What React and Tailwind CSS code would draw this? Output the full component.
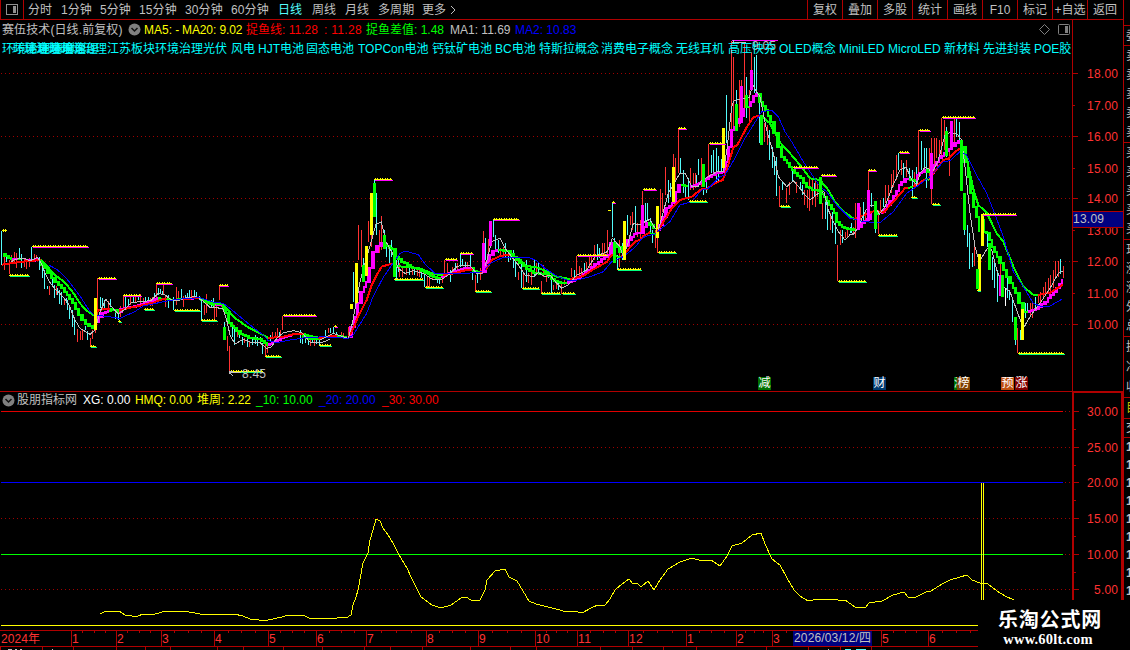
import React from "react";

const FONT = "font-['Liberation_Sans','Noto_Sans_CJK_SC',sans-serif]";
const C = "#54fcfc", R = "#ff3232", G = "#00ff00", M = "#ff00ff", Y = "#ffff00", S = "#ff0000", B = "#0000ff", W = "#c0c0c0";

// Each section lists its series in thirds of a pixel, relative to its origin.
const sections = [
  {
    o: [0, 220],
    cyan: "4,33,135 19,98,125 58,84,118 64,102,143 94,80,120 118,112,150 127,130,175 133,150,207 142,198,206 157,160,195 163,195,235 172,205,225 178,210,252 184,215,255 199,235,250 202,240,270 208,255,297 217,270,320 223,290,345 256,318,330 262,332,360 301,232,265 307,235,258 313,240,270 331,237,262 346,270,298 355,275,300 376,228,262 385,238,258 400,230,250 415,230,240 436,230,250 445,232,250 463,218,235 475,205,225 481,208,222 487,212,222 505,225,265 520,230,270 544,208,238 556,225,240 562,220,240 568,210,240 583,210,232 589,215,232 598,228,240 604,240,300 634,240,260 640,235,262 673,305,320 697,320,350 703,318,375 718,330,355 727,350,375 742,350,380 757,350,375 766,345,372 772,350,378 781,350,370 787,370,402 811,345,365 838,335,350 901,330,370 907,350,372 916,345,368 925,350,375 937,345,370 949,350,372 958,350,375",
    red: "13,110,150 28,120,163 34,105,130 43,96,125 49,98,145 73,115,140 79,120,148 88,115,140 103,102,118 109,105,118 148,198,225 169,198,225 193,240,255 232,328,365 241,332,360 247,330,360 271,355,380 277,330,358 286,300,340 292,175,310 325,242,265 361,258,292 370,228,270 391,230,255 406,225,250 421,222,255 430,235,258 451,235,258 457,230,258 469,190,235 490,195,222 496,225,260 529,202,255 535,212,235 550,228,262 574,210,235 613,255,285 619,222,280 643,250,298 649,245,292 658,195,240 664,250,262 682,348,392 688,378,455 712,335,350 733,355,370 748,365,382 796,370,408 802,378,400 817,335,355 826,335,350 832,325,350 841,330,350 847,288,330 931,350,378 943,350,378",
    boxes: [["283,234,9,96", Y], ["669,320,9,40", G]],
    high: "96,264,79 294,348,175 370,422,226 469,515,190 657,684,196 850,948,286",
    low: "28,88,166 271,288,379 355,364,304 431,462,268 521,600,271 604,652,301 796,843,409 956,992,376 690,788,454",
    fast: [[G, "10,103 22,108 37,117"], [M, "37,117 55,118"], [G, "55,118 64,118"], [M, "75,120 100,122 118,118"], [G, "120,122 138,145 160,175 180,195 205,225 222,250 240,285 262,312 282,325"], [M, "292,305 300,292 312,280 328,272"], [G, "328,272 345,270 357,275"], [M, "357,275 370,268 390,262 420,255 450,245 475,235"], [G, "475,235 500,237 520,240"], [M, "545,237 600,234"], [G, "600,236 620,245 645,256"], [M, "645,256 665,255"], [G, "665,255 680,280 690,310 705,325 725,342 750,353 780,358 805,375"], [M, "805,375 830,362 855,352 875,344"], [G, "905,345 925,355 960,358"]],
    slow: [[S, "5,134 30,130 60,126 100,122 122,120"], [G, "122,120 145,143 165,165 185,180 205,200 222,222 240,250 258,270 282,287"], [S, "288,274 310,267 330,266"], [G, "330,266 345,270 357,275"], [S, "357,272 390,263 420,257 460,248 480,240 500,235"], [G, "500,235 520,240 545,237"], [S, "545,237 600,234"], [G, "600,234 620,244 645,250 668,253 685,270 700,290 730,312 750,325 780,340 805,354"], [S, "805,354 850,350 880,343 912,342"], [G, "912,342 930,348 955,353"], [S, "955,353 975,352 992,350"]],
    blue: "148,136 170,148 190,165 210,188 240,228 268,272 280,283 320,290 345,292 360,296 380,285 400,278 430,258 460,252 490,245 530,238 600,233 640,246 670,250 690,265 720,290 750,315 790,345 805,362 830,368 870,360 910,354 990,349",
    white: "34,125 45,118 70,114 90,122 112,112 122,125 135,160 148,185 165,208 180,220 205,250 225,300 240,325 270,343 285,330 300,275 318,238 330,255 355,282 375,268 395,247 430,245 455,240 475,220 495,225 515,240 540,240 560,232 590,230 605,240 630,262 668,265 680,300 690,345 705,372 730,358 750,366 780,368 800,386 815,380 830,355 850,338 880,332 905,338 930,366 965,368 990,358",
  },
  {
    o: [320, 160],
    cyan: "16,510,528 31,503,520 40,500,520 49,515,528 100,335,425 169,100,225 130,295,320 163,60,70 193,210,250 199,250,292 208,255,310 214,240,290 229,300,358 235,290,335 268,325,345 283,325,345 304,325,355 313,335,382 352,340,370 358,350,372 391,330,365 406,308,335 421,280,320 427,297,315 436,305,320 451,280,320 457,335,360 472,340,368 496,235,300 520,178,230 526,225,270 535,240,280 556,248,290 565,280,305 571,270,300 580,270,325 586,290,350 604,300,385 619,300,365 643,300,350 655,310,345 685,330,355 694,345,400 715,370,390 763,330,362 793,310,340 832,253,300 838,265,295 877,128,230 883,235,260 892,285,328 907,250,300 922,165,225 946,138,215 976,130,185 982,130,180 991,175,215 997,210,250",
    red: "25,503,520 64,515,535 70,520,530 85,500,530 115,195,300 124,210,320 145,183,245 154,225,260 178,210,280 184,168,270 238,310,350 247,320,350 259,325,345 277,325,345 292,330,348 298,325,350 322,350,380 328,350,380 337,340,360 367,345,370 373,300,350 382,308,340 397,320,345 412,310,330 442,305,320 466,345,392 481,325,360 490,213,250 505,238,290 541,265,285 550,262,290 595,335,360 610,335,385 625,340,370 634,330,375 649,310,340 664,362,400 670,315,350 679,330,365 700,375,390 709,370,388 724,370,402 733,355,375 754,325,352 769,288,350 778,318,345 784,325,345 799,305,330 808,290,325 814,290,320 823,255,300 847,250,290 853,250,285 862,210,290 898,240,320 931,168,195 937,155,210 952,190,230 961,180,240 967,92,135 1006,235,265 1012,235,280",
    boxes: [["90,432,9,14", Y], ["105,310,9,120", Y], ["126,315,9,50", G], ["135,258,9,90", Y], ["150,98,9,127", Y], ["159,68,9,103", G], ["189,225,9,42", G], ["219,265,9,88", G], ["486,248,9,88", M], ["507,183,9,75", M], ["879,245,9,62", G], ["909,183,9,117", Y], ["963,135,9,84", M], ["1008,138,9,95", Y]],
    high: "163,215,58 42,50,498 375,412,298 421,458,280 520,596,178 770,864,286 876,885,127 970,1008,88",
    low: "223,308,358 315,368,382 466,513,394 605,657,385 664,720,400 726,765,400 892,962,328 1014,1020,276",
    fast: [[M, "0,532 40,529"], [G, "50,529 80,530"], [M, "88,530 98,500 108,470 118,430 128,395 142,365 152,325 165,275 178,258 190,250"], [G, "190,250 205,258 220,268 230,290 250,305 275,320 300,328 320,340 345,350 362,355"], [M, "362,352 375,345 400,335 440,325 455,325"], [G, "455,325 465,333 482,338"], [M, "482,338 490,335 500,310 512,285 525,272 535,271"], [G, "535,271 565,272 585,290 605,310 625,328 645,338 665,342 680,340 700,358 725,370 740,370"], [M, "740,370 760,362 785,348 810,330 830,312 850,298 868,285 878,250"], [G, "885,252 895,262 908,275"], [M, "912,268 918,258 930,240 945,222 965,218 975,200 984,188"], [G, "984,188 995,195 1005,205"]],
    slow: [[S, "0,535 40,527 50,528"], [G, "50,528 60,530 80,531"], [S, "85,532 100,505 115,468 140,420 155,375 170,345 185,320 215,311"], [G, "225,318 270,322 310,330 345,343 370,345"], [S, "370,345 400,340 440,330 460,328"], [G, "460,330 480,338"], [S, "480,338 500,325 515,300 540,288 570,284"], [G, "570,286 590,292 620,318 650,322 670,330 690,338 710,350 750,357"], [S, "750,357 790,348 820,328 860,306 877,283"], [G, "883,288 905,292"], [S, "905,290 925,268 945,245 962,238 970,228 990,217"], [G, "990,220 1008,224"]],
    blue: "0,530 85,535 100,525 115,500 140,460 160,408 190,352 220,308 240,280 255,273 295,284 315,312 345,340 420,342 490,335 510,310 550,292 630,294 650,302 675,325 710,348 740,360 770,360 810,350 850,335 875,305 910,290 945,262 962,240 975,230 1012,220",
    white: "0,540 20,530 40,520 60,527 85,535 97,490 110,420 120,365 135,310 155,240 168,192 184,186 198,245 220,285 235,325 255,340 280,332 310,340 340,360 365,358 385,345 410,320 430,315 450,318 470,340 485,342 500,305 515,245 540,235 555,265 575,290 595,315 615,345 640,350 655,338 675,350 690,345 710,370 725,385 745,375 770,345 800,330 825,290 862,275 877,235 900,260 910,290 925,245 940,190 960,195 975,185 990,178 1005,205 1018,205",
  },
  {
    o: [620, 30],
    cyan: "145,450,520 151,460,500 181,385,430 190,420,490 196,465,500 205,445,510 229,435,465 235,388,435 250,475,495 259,455,490 274,375,430 280,360,430 289,355,455 295,378,455 304,388,430 319,195,340 349,180,225 379,140,265 403,80,190 409,75,200 418,200,340 448,300,390 457,350,415 463,380,435 469,380,498 487,455,480 517,415,455 541,455,480 547,465,495 583,460,500 616,500,568 622,510,600 637,545,610 646,570,642 667,600,640 691,590,610",
    red: "112,620,667 106,600,655 121,478,590 127,490,545 136,410,495 160,373,410 166,385,450 175,298,430 211,415,480 220,430,480 226,430,475 244,385,470 265,342,440 334,33,300 340,80,300 358,150,290 364,150,170 373,35,240 388,180,285 394,65,120 433,280,335 442,285,345 478,468,530 499,475,520 508,455,495 529,455,490 553,480,525 562,480,535 568,440,542 577,445,525 586,450,530 592,460,500 607,520,568 631,550,600 652,645,753 661,600,645 676,605,625 682,595,620 700,590,612",
    boxes: [["156,410,9,105", Y], ["306,293,9,120", Y], ["246,402,9,70", G], ["345,222,9,80", G], ["360,168,9,110", M], ["367,235,10,28", M], ["375,195,9,38", G], ["390,120,9,60", M], ["420,255,9,90", G], ["597,440,9,82", G]],
    high: "175,198,295 267,316,340 519,594,411 602,648,436",
    low: "114,168,667 207,262,514 480,510,529 653,738,753",
    fast: [[M, "115,600 122,585 132,560 145,535 160,518 170,485 182,465"], [G, "182,465 205,468"], [M, "210,470 235,463 250,452 270,440 290,430 310,425 320,395 330,350 340,300 355,280 370,255"], [G, "375,232 390,230"], [M, "388,228 395,215 405,198 415,193"], [G, "415,193 425,215 440,240 455,275 468,310 480,350 490,380 505,400 520,420 545,445 565,470 580,480 600,482 615,500 630,525 645,550 655,575 670,592 705,600"]],
    slow: [[S, "112,605 140,560 155,535 180,510 215,500 245,477 260,477 280,462 308,450 320,420 340,352 352,345 380,292 400,262 420,256"], [G, "420,256 450,280 478,335 510,370 540,405 570,445 600,450 625,480 645,515 665,540 702,567"]],
    blue: "112,605 150,575 180,525 215,515 245,480 265,475 300,440 315,435 345,385 375,325 400,285 425,245 455,240 475,260 495,305 515,335 550,395 600,470 620,485 650,525 690,565",
    white: "115,600 130,545 145,490 165,455 180,430 195,430 215,470 235,470 245,450 265,440 290,425 310,425 322,350 335,230 342,212 375,205 388,202 398,165 410,185 420,200 440,300 460,370 475,440 500,470 520,452 540,475 555,495 570,510 595,490 612,485 625,540 640,575 655,605 675,630 690,615 702,610",
  },
  {
    o: [850, 90],
    cyan: "4,400,430 40,335,395 64,310,350 76,415,430 100,325,350 145,190,240 160,220,265 178,235,265 187,240,320 199,232,285 214,153,240 223,175,240 229,175,295 289,110,200 319,88,140 328,95,150 343,310,435 352,405,470 358,430,537 367,488,530 412,430,470 427,500,570 433,510,595 442,540,635 472,565,625 478,600,630 487,625,695 496,745,765 511,720,750 526,640,685 532,640,670 556,620,660 631,507,553",
    red: "16,340,443 31,350,410 46,365,400 55,243,300 85,375,433 91,330,370 106,285,340 115,285,330 124,253,310 130,240,290 139,195,270 154,210,255 169,210,260 193,245,290 205,120,260 238,175,270 244,143,343 253,145,230 259,145,205 268,150,200 274,85,200 283,90,180 298,180,258 313,88,155 373,450,528 451,515,600 502,715,790 541,640,680 547,640,685 565,615,640 571,605,635 580,590,620 586,575,615 595,565,610 601,555,610 610,540,595 616,513,560 625,513,560 640,528,563",
    boxes: [["22,340,9,80", M], ["51,300,9,92", M], ["72,333,9,83", G], ["240,190,9,108", M], ["286,123,8,75", G], ["300,93,9,87", M], ["330,150,9,153", G], ["339,310,9,110", G], ["384,492,9,110", Y], ["378,537,9,60", G], ["393,373,9,95", Y], ["414,460,9,82", G], ["447,555,9,62", M], ["453,555,9,65", G], ["492,680,9,70", G], ["513,657,9,92", Y], ["465,595,3,53", "#fff"]],
    high: "55,78,241 148,177,187 208,240,121 277,375,82 397,498,373",
    low: "85,142,436 184,200,322 246,270,343 505,642,790 382,391,601",
    fast: [[G, "0,418 17,420"], [M, "22,415 28,412 40,398 55,388 65,370"], [G, "72,358 80,372 90,370"], [M, "92,370 98,366 115,345 135,318 150,285 170,268 178,266"], [G, "178,268 197,272"], [M, "197,270 205,255 228,240"], [G, "228,240 240,246"], [M, "245,250 255,225 270,205 285,190 300,178 320,160 330,153"], [G, "340,170 350,215 358,260 366,310 374,350 384,380 388,424"], [G, "400,390 404,425 415,428 430,470 445,500 465,540 485,580 500,610 512,640 525,665 535,667"], [M, "535,667 560,658 590,635 615,605 640,570"]],
    slow: [[G, "0,380 12,387"], [S, "12,387 30,380 55,370 75,362 100,368 130,335 165,295 174,293"], [G, "174,293 188,292"], [S, "188,290 200,285 225,268"], [G, "225,267 238,269"], [S, "240,262 262,235 280,210 295,206 310,190 330,175"], [G, "340,178 350,205 360,250 372,305 385,345 410,368 440,430 460,455 490,530 520,590 550,614 565,615"], [S, "565,615 600,608 640,583"]],
    blue: "-6,382 40,395 90,398 130,365 170,310 200,290 240,260 280,215 300,212 330,185 350,195 385,265 410,310 430,360 460,440 490,545 520,590 550,640 575,650 600,648 637,627",
    white: "-4,432 12,432 25,410 45,365 60,345 75,348 88,372 105,350 125,295 150,240 168,232 185,268 200,285 210,250 225,232 235,235 245,250 265,210 285,135 300,128 320,130 335,150 345,230 360,370 375,470 388,515 400,495 412,475 425,480 440,540 460,590 480,605 500,660 520,715 540,680 570,640 600,595 625,550 638,543",
  },
];

const parse = (s) => s.split(" ").map((t) => t.split(",").map(Number));
const TOP = 20;
const pts = (s, [ox, oy]) => parse(s).map(([x, y]) => [ox + x / 3, oy - TOP + y / 3]);
const poly = (s, o) => pts(s, o).map((p) => p.map((v) => v.toFixed(2)).join(",")).join(" ");

// Stepped trace: blocks of constant width that follow the average bar by bar.
function steps(s, o, w) {
  const p = pts(s, o);
  let d = "";
  for (let i = 0; i < p.length - 1; i++) {
    const [x0, y0] = p[i], [x1, y1] = p[i + 1];
    const n = Math.max(1, Math.round(Math.abs(x1 - x0) / w));
    for (let k = 0; k < n; k++) {
      const xa = Math.round(x0 + ((x1 - x0) * k) / n), xb = Math.round(x0 + ((x1 - x0) * (k + 1)) / n);
      const ya = y0 + ((y1 - y0) * k) / n, yb = y0 + ((y1 - y0) * (k + 1)) / n;
      const t = Math.round(Math.min(ya, yb)) - 1, b = Math.round(Math.max(ya, yb)) + 1;
      d += `M${xa} ${t}H${Math.max(xb, xa + 2)}V${b}H${xa}Z`;
    }
  }
  return d;
}

function Wicks({ s, o, color }) {
  return <path fill={color} d={parse(s).map(([x, a, b]) => `M${o[0] + Math.floor(x / 3)} ${Math.round(o[1] - TOP + a / 3)}h1V${Math.round(o[1] - TOP + b / 3)}h-1Z`).join("")} />;
}

function Markers({ s, o, color }) {
  return parse(s).map(([a, b, y], i) => {
    const x0 = o[0] + Math.round(a / 3), x1 = o[0] + Math.round(b / 3), yy = o[1] - TOP + Math.floor(y / 3);
    return (
      <g key={i}>
        <rect x={x0 + 1} y={yy + 1} width={x1 - x0} height="1" fill={color} />
        <rect x={x0} y={yy} width={x1 - x0} height="1" fill={Y} />
        <path d={`M${x0 + 1} ${yy - 0.5}H${x1}`} stroke={Y} strokeDasharray="1 1 1 2" />
      </g>
    );
  });
}

function PriceChart() {
  return (
    <svg width="1072" height="371" viewBox="0 0 1072 371" className="block" shapeRendering="crispEdges">
      {[73, 136, 198, 261, 324].map((y) => <path key={y} d={`M1 ${y - TOP + 0.5}H1072`} stroke="#a00000" strokeDasharray="1 3" />)}
      {sections.map((q, i) => (
        <g key={i}>
          <Wicks s={q.cyan} o={q.o} color={C} />
          <Wicks s={q.red} o={q.o} color={R} />
        </g>
      ))}
      {sections.map((q, i) => (
        <g key={i}>
          {q.fast.map(([c, s], k) => <path key={k} d={steps(s, q.o, 3)} fill={c} />)}
          {q.slow.map(([c, s], k) => <polyline key={k} points={poly(s, q.o)} fill="none" stroke={c} strokeWidth="2" />)}
          <polyline points={poly(q.white, q.o)} fill="none" stroke={W} />
          <polyline points={poly(q.blue, q.o)} fill="none" stroke={B} />
          {q.boxes.map(([s, c], k) => {
            const [x, y, w, h] = s.split(",").map(Number);
            return <rect key={k} x={q.o[0] + Math.round(x / 3)} y={q.o[1] - TOP + Math.round(y / 3)} width={Math.round(w / 3)} height={Math.round(h / 3)} fill={c} />;
          })}
          <Markers s={q.high} o={q.o} color={M} />
          <Markers s={q.low} o={q.o} color="#00ff80" />
        </g>
      ))}
      <path d="M1.500 211V245" stroke={C} />
      <path d="M2 210.500H7M3.500 209V212M5.500 209V212M608 190.500H611" stroke={Y} />
      <path d="M732 20.500H778" stroke={M} />
      <path d="M229 352.500H241M229 353.500H231M231 354.500H232M232 355.500H233M229 351.500H233M732 22.500H746M733.500 20V24" stroke={W} />
      <text x="242" y="358" fontSize="12" fill={W} textLength="24">8.45</text>
      <text x="752" y="30" fontSize="12" fill={W} textLength="24">9.05</text>
    </svg>
  );
}

const curve = "100,614 104,612 114,611 119,611 125,615 132,616 138,616 143,614 152,615 162,612 173,611 182,611 195,613 205,615 221,614 234,614 243,616 250,619 259,620 268,620 282,617 288,615 305,616 309,618 337,618 344,617 346,618 351,615 353,605 356,597 358,590 363,563 368,553 370,540 373,530 376,519 380,521 383,528 388,535 393,543 399,555 407,568 411,577 417,589 421,597 432,605 441,608 451,605 461,598 466,597 471,600 480,600 485,590 487,580 495,571 505,569 509,577 517,581 523,591 529,601 536,604 560,610 563,611 578,612 582,613 593,607 598,605 605,605 610,599 615,590 622,584 629,579 633,584 637,583 641,587 648,581 654,590 660,580 668,569 680,562 692,558 702,561 711,560 720,566 727,556 732,546 742,543 752,535 761,533 765,544 772,559 780,565 787,578 794,590 800,596 808,601 818,599 838,600 845,600 855,607 865,608 869,603 882,601 893,595 904,592 908,597 916,597 926,592 931,591 942,584 950,580 960,577 967,575 972,580 980,583 988,584 997,591 1005,596 1014,600";

function IndicatorChart() {
  return (
    <svg width="1072" height="222" viewBox="0 408 1072 222" className="block" shapeRendering="crispEdges">
      {[411, 447, 482, 518, 554, 589].map((y) => <path key={y} d={`M1 ${y + 0.5}H1072`} stroke="#a00000" strokeDasharray="1 3" />)}
      <path d="M1 411.500H1063" stroke="#e00000" />
      <path d="M1 482.500H1063" stroke={B} />
      <path d="M1 554.500H1063" stroke={G} />
      <path d="M1 625.500H979M981.500 483V600M983.500 483V600" stroke={Y} />
      <polyline points={curve} fill="none" stroke={Y} />
    </svg>
  );
}

const periods = [["分时", "w-[33px]"], ["1分钟", "w-[39px]"], ["5分钟", "w-[39px]"], ["15分钟", "w-[46px]"], ["30分钟", "w-[46px]"], ["60分钟", "w-[47px]"], ["日线", "w-[34px] text-[#54fcfc]"], ["周线", "w-[33px]"], ["月线", "w-[33px]"], ["多周期", "w-[44px]"], ["更多", "w-[27px]"]];

function TopBar() {
  return (
    <div className="flex h-[20px] w-[1130px] items-stretch text-[#c0c0c0]">
      <div className="flex w-[1123px] border-b border-[#b00000]">
        <div className="flex w-[24px] items-center justify-center border-x border-[#b00000]">
          <svg width="12" height="11" shapeRendering="crispEdges"><rect x=".5" y=".5" width="11" height="10" rx="1" fill="none" stroke="#909090" /><rect x="7" y="2" width="3" height="7" fill="#909090" /></svg>
        </div>
        <div className="flex flex-1 items-center pl-[4px] leading-[18px]">
          {periods.map(([t, w]) => <span key={t} className={`${w} shrink-0 tracking-[0.1px]`}>{t}</span>)}
          <svg width="8" height="10" className="shrink-0"><path d="M2 1L6 5L2 9" fill="none" stroke="#c0c0c0" /></svg>
        </div>
        <div className="flex">
          {["复权", "叠加", "多股", "统计", "画线", "F10", "标记", "+自选", "返回"].map((t) => (
            <span key={t} className="flex w-[35px] items-center justify-center border-l border-[#b00000] leading-[18px]">{t}</span>
          ))}
          <span className="w-px" />
        </div>
      </div>
      <div className="w-[7px] border-l border-[#b00000]" />
    </div>
  );
}

const Chevron = () => (
  <svg width="13" height="13" className="shrink-0"><circle cx="6.500" cy="6.500" r="6" fill="#808080" /><path d="M3.500 5L6.500 8L9.500 5" fill="none" stroke="#111" strokeWidth="1.500" /></svg>
);

const readings = [["MA5: -", "w-[38px] text-[#ffff00]"], ["MA20: 9.02", "w-[64px] tracking-[-0.1px] text-[#ffff00]"], ["捉鱼线: 11.28", "w-[78px] text-[#ff0000]"], [": 11.28", "w-[42px] tracking-[0.3px] text-[#ff0000]"], ["捉鱼差值: 1.48", "w-[84px] text-[#00ff00]"], ["MA1: 11.69", "w-[65px] text-[#c0c0c0]"], ["MA2: 10.83", "w-[65px] text-[#0000ff]"]];
const tags = [["江苏板块环境治理光伏", "w-[124px]"], ["风电", "w-[27px]"], ["HJT电池", "w-[48px]"], ["固态电池", "w-[52px]"], ["TOPCon电池", "w-[74px]"], ["钙钛矿电池", "w-[63px]"], ["BC电池", "w-[44px]"], ["特斯拉概念", "w-[62px]"], ["消费电子概念", "w-[75px]"], ["无线耳机", "w-[52px]"], ["高压快充", "w-[51px]"], ["OLED概念", "w-[60px]"], ["MiniLED", "w-[49px]"], ["MicroLED", "w-[56px]"], ["新材料", "w-[39px]"], ["先进封装", "w-[51px]"], ["POE胶", "w-[38px]"]];

function PricePanel() {
  return (
    <div className="relative h-[371px] w-[1072px] overflow-hidden">
      <PriceChart />
      <div className="absolute inset-x-0 top-0 flex h-[19px] items-center pl-[2px]">
        <span className="w-[126px] shrink-0 tracking-[0.1px] text-[#c0c0c0]">赛伍技术(日线.前复权)</span>
        <span className="flex w-[16px]"><Chevron /></span>
        {readings.map(([t, c]) => <span key={t} className={`${c} shrink-0`}>{t}</span>)}
        <svg width="34" height="13" className="ml-auto mr-[1px]" fill="none" stroke="#808080"><path d="M7.500 1.500L12.500 6.500L7.500 11.500L2.500 6.500Z" /><rect x="21.500" y="1.500" width="11" height="10" rx="1" /><path d="M29.500 3V10" strokeWidth="3" /></svg>
      </div>
      <div className="absolute left-0 top-[20px] flex h-[18px] items-center text-[#00ffff]">
        <span className="grid w-[107px] shrink-0 grid-cols-1 grid-rows-1">
          {["pl-[2px]", "pl-[12px]", "pl-[25px]", "pl-[38px]", "pl-[50px]", "pl-[59px]"].map((p) => <span key={p} className={`${p} col-start-1 row-start-1`}>环境治理</span>)}
        </span>
        {tags.map(([t, w]) => <span key={t} className={`${w} shrink-0`}>{t}</span>)}
      </div>
      <div className="absolute bottom-[1px] left-[758px] flex h-[13px] items-center leading-[13px] text-white">
        <span className="w-[13px] bg-[#007000] text-center">减</span>
        <span className="ml-[102px] w-[13px] bg-[#003a70] text-center">财</span>
        <span className="ml-[68px] w-[3px] overflow-hidden bg-[#007000]">涨</span>
        <span className="w-[13px] bg-[#804000] text-center">榜</span>
        <span className="ml-[31px] w-[13px] bg-[#c05010] text-center">预</span>
        <span className="ml-[1px] w-[13px] bg-[#800000] text-center">涨</span>
      </div>
    </div>
  );
}

const priceScale = [["18.00", 73], ["17.00", 105], ["16.00", 136], ["15.00", 168], ["14.00", 198], ["13.00", 230], ["12.00", 261], ["11.00", 293], ["10.00", 324]];
const lowScale = [["30.00", 411], ["25.00", 447], ["20.00", 482], ["15.00", 518], ["10.00", 554], ["5.00", 589]];

function Axis({ data, top, height, mid, tag }) {
  const right = mid ? 44 : 45;
  return (
    <svg width={mid ? 47 : 50} height={height} viewBox={`0 ${top} ${mid ? 47 : 50} ${height}`} className="block" shapeRendering="crispEdges">
      {data.map(([t, y], i) => (
        <g key={t}>
          <path d={`M0 ${y + 0.5}h${mid || i % 2 === 0 ? 5 : 2}${mid && i < 5 ? `M0 ${y + 18.5}h2` : ""}`} stroke="#b00000" />
          <text x={right} y={y + 5} textAnchor="end" fontSize="12" fill={R} textLength={t.length > 4 ? 31 : 24}>{t}</text>
        </g>
      ))}
      {tag && <g><rect x="-1" y="211.500" width="51" height="16" fill="#000080" stroke="#b00000" /><text x="0" y="223" fontSize="12" fill={W} textLength="31">13.09</text></g>}
    </svg>
  );
}

function TimeAxis() {
  const months = [["1", 72], ["2", 117], ["3", 162], ["4", 215], ["5", 269], ["6", 317], ["7", 367], ["8", 427], ["9", 479], ["10", 536], ["11", 578], ["12", 629], ["1", 687], ["2", 737], ["3", 773], ["", 829], ["5", 882], ["6", 929], ["", 985]];
  return (
    <svg width="1130" height="20" viewBox="0 630 1130 20" className="block" shapeRendering="crispEdges">
      <path d="M0 630.500H1130M0 646.500H1130" stroke="#b00000" />
      <text x="1" y="643" fontSize="12" fill={R} textLength="39">2024年</text>
      {months.map(([t, x], i) => {
        const next = months[i + 1] ? months[i + 1][1] : x;
        return (
          <g key={i}>
            <path d={`M${x - 0.5} 630V646${[1, 2, 3].map((k) => `M${Math.round(x + ((next - x) * k) / 4) - 0.5} 631v2`).join("")}`} stroke="#b00000" />
            <text x={x} y="643" fontSize="12" fill={R} letterSpacing=".4">{t}</text>
          </g>
        );
      })}
      <path d={[0, 42, 73, 116, 145, 170, 217, 243, 283, 322, 364, 390, 422, 470, 510, 536, 600, 632, 663, 696, 766, 808, 840, 871].map((x) => `M${x + 0.5} 647v3`).join("")} stroke="#b00000" />
      <path d="M8 649.500H12M15 649.500H17M20 649.500H22M52 649.500H53M828 649.500H829" stroke={W} />
      <path d="M845 649.500H851M856 649.500H866" stroke={C} />
      <rect x="793" y="631" width="79" height="15" fill="#000080" />
      <text x="794" y="642" fontSize="12" fill={W} textLength="77">2026/03/12/四</text>
    </svg>
  );
}

const sideCells = [["h-[6px]", ""], ["h-[20px]", "委"], ["h-[97px]", "卖卖卖卖卖"], ["h-[97px]", "买买买买买"], ["h-[97px]", "现涨涨外总"], ["h-[61px]", "换净收"], ["h-[21px]", "目"], ["h-[19px]", "交"]];

function SideStrip() {
  return (
    <div className="flex w-[7px] flex-col overflow-hidden border-l border-[#b00000] text-[#c0c0c0]">
      {sideCells.map(([h, t], i) => (
        <div key={i} className={`${h} ${t === "目" ? "text-[#c0c000]" : ""} flex shrink-0 flex-col items-start justify-around overflow-hidden border-b border-[#b00000] pl-[2px] leading-[12px]`}>
          {t.split("").map((c, k) => <span key={k} className="block h-[12px] w-[12px] shrink-0">{c}</span>)}
        </div>
      ))}
      <div className="flex flex-col pl-[2px] font-bold leading-[18px]">
        {[0, 1, 2, 3, 4, 5, 6, 7, 8].map((k) => <span key={k} className="h-[18px]">1</span>)}
      </div>
    </div>
  );
}

const lowReadings = [["XG: 0.00", "w-[52px] text-white"], ["HMQ: 0.00", "w-[62px] tracking-[-0.1px] text-[#ffff00]"], ["堆周: 2.22", "w-[59px] text-[#ffff00]"], ["_10: 10.00", "w-[63px] text-[#00ff00]"], ["_20: 20.00", "w-[63px] text-[#0000ff]"], ["_30: 30.00", "w-[63px] text-[#ff0000]"]];

export default function App() {
  return (
    <div className={`relative flex h-[650px] w-[1130px] flex-col overflow-hidden whitespace-nowrap bg-black text-[12px] leading-[16px] ${FONT}`}>
      <TopBar />
      <div className="flex h-[610px]">
        <div className="flex w-[1072px] flex-col">
          <PricePanel />
          <div className="flex h-[17px] items-center border-t border-[#b00000] pl-[2px]">
            <span className="flex w-[15px]"><Chevron /></span>
            <span className="w-[66px] text-[#c0c0c0]">股朋指标网</span>
            {lowReadings.map(([t, c]) => <span key={t} className={c}>{t}</span>)}
          </div>
          <IndicatorChart />
        </div>
        <div className="flex w-[51px] flex-col">
          <div className="h-[371px] border-l border-[#b00000]"><Axis data={priceScale} top={20} height={371} tag /></div>
          <div className="h-[239px] border-x-2 border-t-2 border-[#b00000]"><Axis data={lowScale} top={393} height={237} mid /></div>
        </div>
        <SideStrip />
      </div>
      <TimeAxis />
      <div className="absolute bottom-0 right-0 flex h-[50px] w-[152px] flex-col items-center bg-black pr-[8px] pt-[7px] text-white">
        <span className="font-['Noto_Sans_CJK_SC',sans-serif] text-[20px] font-bold leading-[24px] tracking-[0.8px]">乐淘公式网</span>
        <span className="pr-[4px] font-['Liberation_Serif',serif] text-[14.5px] font-bold leading-[16px] tracking-[0.2px]">www.60lt.com</span>
      </div>
    </div>
  );
}
